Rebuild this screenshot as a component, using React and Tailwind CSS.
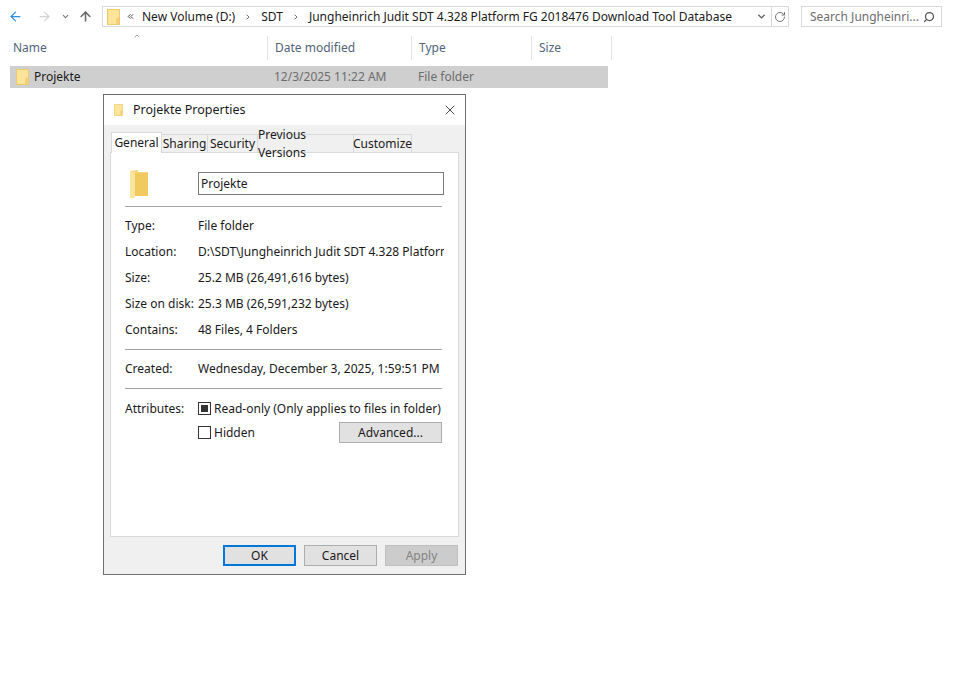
import { ArrowLeft, ArrowRight, ArrowUp, ChevronDown, ChevronRight, ChevronUp, ChevronsLeft, RotateCw, Search, X } from 'lucide-react'

function Folder({ className }) {
  return (
    <svg className={className} viewBox="0 0 12 16" preserveAspectRatio="none">
      <path d="M0.5 0.5 H11.5 V15.5 H0.5 Z" fill="#fce49a" stroke="#eccb70" />
      <path d="M8.5 15 V9.5 L11 8 V15 Z" fill="#f3d071" />
    </svg>
  )
}

function BigFolder({ className }) {
  return (
    <svg className={className} viewBox="0 0 18 28">
      <path d="M0 1 L8 0 V2 L18 2 V26 L5 26 L0 28 Z" fill="#f6d67e" />
      <path d="M0 1 L5 3 V28 L0 28 Z" fill="#fbe59f" />
      <path d="M5 3 L18 3 V26 L5 26 Z" fill="#f0c95f" />
    </svg>
  )
}

function Tab({ label, w }) {
  return (
    <div className={`${w} h-[19px] border border-[#d9d9d9] border-l-0 bg-[#f0f0f0] flex items-center justify-center text-[#1a1a1a]`}>
      {label}
    </div>
  )
}

function InfoRow({ label, children }) {
  return (
    <div className="h-[26px] flex items-center">
      <span className="w-[73px] shrink-0">{label}</span>
      <span className="whitespace-nowrap overflow-hidden">{children}</span>
    </div>
  )
}

function Separator({ className }) {
  return <div className={`h-px bg-[#a0a0a0] ${className}`}></div>
}

function DialogButton({ className, children }) {
  return <button className={`w-[73px] h-[21px] flex items-center justify-center ${className}`}>{children}</button>
}

function HeaderCell({ label, w }) {
  return (
    <div className={`${w} h-[24px] border-r border-[#e5e5e5] pl-[7px] flex items-center`}>{label}</div>
  )
}

export default function App() {
  return (
    <main className="relative w-[953px] h-[676px] overflow-hidden bg-white text-[12px] text-[#1a1a1a] font-['Noto_Sans',sans-serif]">
      {/* barra de direccion */}
      <div className="h-[36px] flex items-start pt-[6px]">
        <div className="w-[102px] h-[21px] flex items-center pl-[8px]">
          <ArrowLeft className="w-[15px] h-[15px] text-[#2f8fe0]" strokeWidth={2} />
          <ArrowRight className="w-[15px] h-[15px] ml-[14px] text-[#d4d4d4]" strokeWidth={2} />
          <ChevronDown className="w-[9px] h-[9px] ml-[9px] text-[#7a7a7a]" strokeWidth={3} />
          <ArrowUp className="w-[15px] h-[15px] ml-[8px] text-[#6b6b6b]" strokeWidth={2.5} />
        </div>
        <div className="w-[687px] h-[21px] border border-[#d9d9d9] flex items-center">
          <Folder className="w-[13px] h-[16px] ml-[4px]" />
          <ChevronsLeft className="w-[9px] h-[9px] ml-[6px] text-[#333]" strokeWidth={2.5} />
          <span className="ml-[7px] whitespace-nowrap">New Volume (D:)</span>
          <ChevronRight className="w-[8px] h-[8px] ml-[9px] text-[#777]" strokeWidth={3} />
          <span className="ml-[9px]">SDT</span>
          <ChevronRight className="w-[8px] h-[8px] ml-[9px] text-[#777]" strokeWidth={3} />
          <span className="ml-[9px] whitespace-nowrap">Jungheinrich Judit SDT 4.328 Platform FG 2018476 Download Tool Database</span>
          <div className="ml-auto flex items-center h-full">
            <ChevronDown className="w-[11px] h-[11px] mr-[4px] text-[#555]" strokeWidth={3} />
            <div className="w-[17px] h-full border-l border-[#d9d9d9] flex items-center justify-center">
              <RotateCw className="w-[12px] h-[12px] text-[#777]" strokeWidth={2} />
            </div>
          </div>
        </div>
        <div className="ml-[12px] w-[141px] h-[21px] border border-[#d9d9d9] flex items-center pl-[8px] pr-[6px] text-[#6d6d6d]">
          <span className="whitespace-nowrap">Search Jungheinri...</span>
          <Search className="w-[12px] h-[12px] ml-auto text-[#555] -scale-x-100" strokeWidth={2.5} />
        </div>
      </div>

      {/* encabezado de columnas */}
      <div className="relative flex text-[#51647a]">
        <ChevronUp className="absolute left-[132px] -top-[4px] w-[10px] h-[8px] text-[#777]" strokeWidth={2} />
        <div className="w-[268px] h-[24px] border-r border-[#e5e5e5] pl-[13px] flex items-center">Name</div>
        <HeaderCell label="Date modified" w="w-[144px]" />
        <HeaderCell label="Type" w="w-[120px]" />
        <HeaderCell label="Size" w="w-[80px]" />
      </div>

      {/* fila seleccionada */}
      <div className="ml-[10px] mt-[6px] w-[598px] h-[22px] bg-[#cfcfcf] flex items-center">
        <Folder className="w-[13px] h-[16px] ml-[6px]" />
        <span className="ml-[5px] w-[240px]">Projekte</span>
        <span className="text-[#6d6d6d] w-[144px]">12/3/2025 11:22 AM</span>
        <span className="text-[#6d6d6d]">File folder</span>
      </div>

      {/* ventana de propiedades */}
      <div className="absolute left-[103px] top-[94px] w-[363px] h-[481px] border border-[#6f6f6f] bg-[#f0f0f0] flex flex-col">
        <div className="h-[30px] bg-white flex items-center shrink-0">
          <Folder className="w-[9px] h-[12px] ml-[10px]" />
          <span className="ml-[10px] text-[12.5px]">Projekte Properties</span>
          <X className="w-[16px] h-[16px] ml-auto mr-[7px] text-[#222]" strokeWidth={1.25} />
        </div>

        <div className="flex ml-[7px] mt-[7px] h-[21px] items-end relative z-10">
          <div className="w-[51px] h-[21px] border border-[#d9d9d9] border-b-0 bg-white flex items-center justify-center">General</div>
          <Tab label="Sharing" w="w-[46px]" />
          <Tab label="Security" w="w-[50px]" />
          <Tab label="Previous Versions" w="w-[96px]" />
          <Tab label="Customize" w="w-[58px]" />
        </div>

        <div className="mx-[6px] -mt-px h-[385px] border border-[#d9d9d9] bg-white pt-[19px] px-[14px] shrink-0">
          <div className="flex items-center h-[23px]">
            <BigFolder className="w-[18px] h-[28px] ml-[5px]" />
            <div className="ml-[50px] w-[246px] h-[23px] border border-[#7a7a7a] flex items-center pl-[2px]">Projekte</div>
          </div>
          <Separator className="mt-[11px] w-[317px]" />
          <div className="mt-[6px]">
            <InfoRow label="Type:">File folder</InfoRow>
            <InfoRow label="Location:">
              <span className="block w-[246px] overflow-hidden">D:\SDT\Jungheinrich Judit SDT 4.328 Platform FG 2018476</span>
            </InfoRow>
            <InfoRow label="Size:">25.2 MB (26,491,616 bytes)</InfoRow>
            <InfoRow label="Size on disk:">25.3 MB (26,591,232 bytes)</InfoRow>
            <InfoRow label="Contains:">48 Files, 4 Folders</InfoRow>
          </div>
          <Separator className="mt-[6px] w-[317px]" />
          <div className="mt-[6px]">
            <InfoRow label="Created:">Wednesday, December 3, 2025, 1:59:51 PM</InfoRow>
          </div>
          <Separator className="mt-[6px] w-[317px]" />
          <div className="mt-[9px] flex">
            <span className="w-[73px] h-[21px] leading-[21px]">Attributes:</span>
            <div className="w-[244px]">
              <div className="h-[21px] flex items-center">
                <span className="w-[13px] h-[13px] border border-[#333] flex items-center justify-center">
                  <span className="w-[7px] h-[7px] bg-[#333]"></span>
                </span>
                <span className="ml-[3px] whitespace-nowrap">Read-only (Only applies to files in folder)</span>
              </div>
              <div className="mt-[3px] h-[21px] flex items-center">
                <span className="w-[13px] h-[13px] border border-[#333]"></span>
                <span className="ml-[3px]">Hidden</span>
                <button className="ml-auto w-[103px] h-[21px] border border-[#adadad] bg-[#e1e1e1] flex items-center justify-center">Advanced...</button>
              </div>
            </div>
          </div>
        </div>

        <div className="flex justify-end gap-[8px] mt-[8px] mr-[7px]">
          <DialogButton className="border-2 border-[#0078d7] bg-[#e1e1e1]">OK</DialogButton>
          <DialogButton className="border border-[#adadad] bg-[#e1e1e1]">Cancel</DialogButton>
          <DialogButton className="border border-[#bfbfbf] bg-[#cccccc] text-[#838383]">Apply</DialogButton>
        </div>
      </div>
    </main>
  )
}
